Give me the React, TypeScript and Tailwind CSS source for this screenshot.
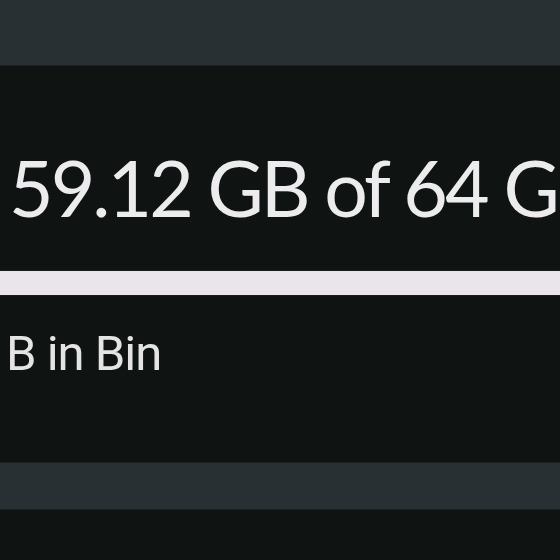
export default function App() {
  return (
    <div className="w-[560px] h-[560px] overflow-hidden bg-[#0f1412] flex flex-col">
      {/* top app bar */}
      <div className="h-[66px] shrink-0 bg-[#283033] border-b border-[#1c2224]" />

      {/* storage summary */}
      <div className="flex flex-col">
        <div
          className="mt-[71px] pl-[9px] whitespace-nowrap text-[77px] leading-[100px] tracking-[-3px] text-[#ecebee]"
          style={{ fontFamily: "Lato, sans-serif" }}
        >
          59.12 GB of 64 GB used
        </div>
        <div className="mt-[33px] h-[26px] bg-[#e9e5ea] border-y border-[#1a1d1c]" />
        <div
          className="mt-[28px] pl-[6px] whitespace-nowrap text-[49px] leading-[60px] tracking-[-1px] text-[#e4e4e4]"
          style={{ fontFamily: "Roboto, sans-serif" }}
        >
          B in Bin
        </div>
      </div>

      {/* next section */}
      <div className="mt-[78px] h-[48px] shrink-0 bg-[#283033] border-y border-[#1c2224]" />
    </div>
  );
}
